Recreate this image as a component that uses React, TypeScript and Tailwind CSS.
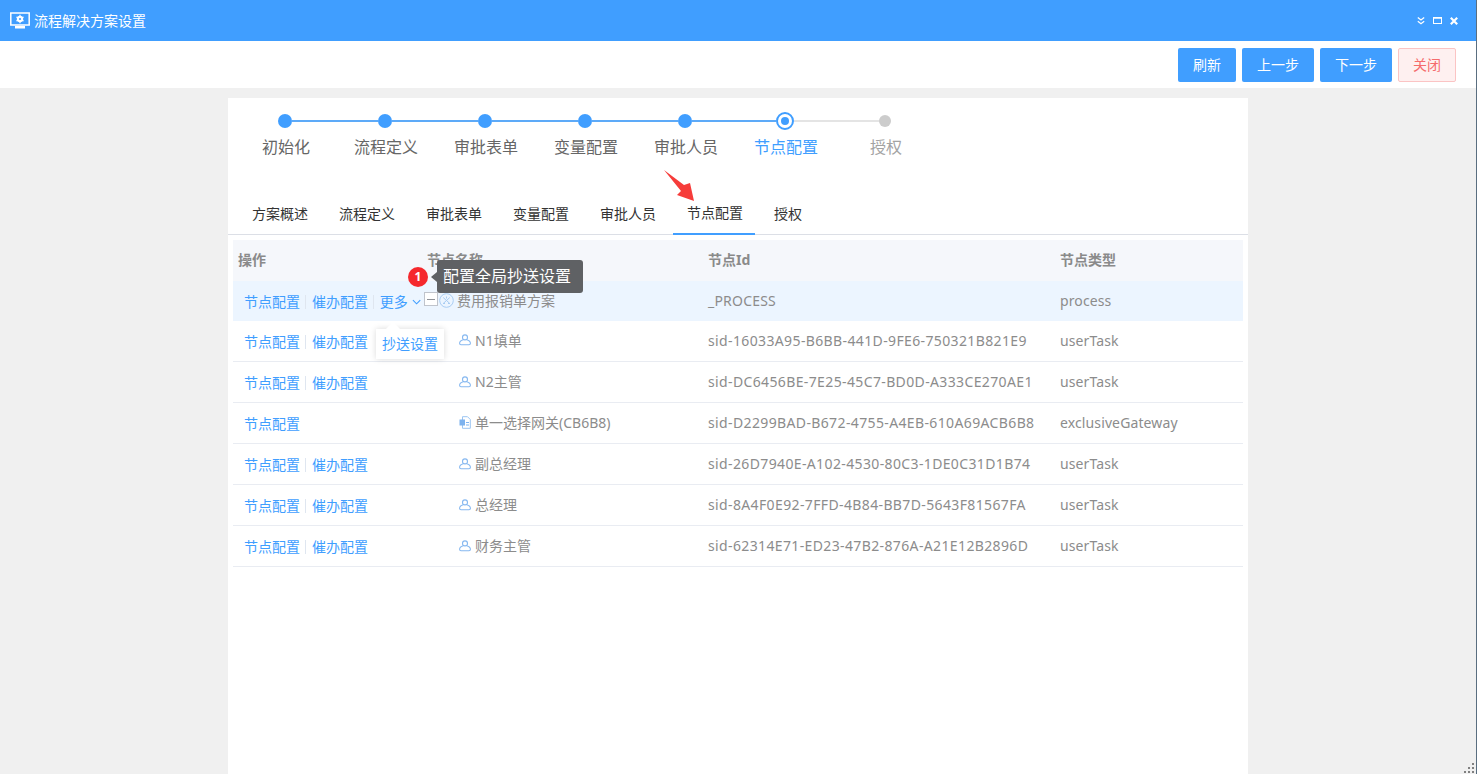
import React from "react";

const steps = [
  { t: "初始化", s: "done" },
  { t: "流程定义", s: "done" },
  { t: "审批表单", s: "done" },
  { t: "变量配置", s: "done" },
  { t: "审批人员", s: "done" },
  { t: "节点配置", s: "active" },
  { t: "授权", s: "todo" },
];
const tabs = ["方案概述", "流程定义", "审批表单", "变量配置", "审批人员", "节点配置", "授权"];
type Row = { name: string; id: string; type: string; icon: "root" | "user" | "doc"; urge: boolean; h: string; more?: boolean };
const rows: Row[] = [
  { name: "费用报销单方案", id: "_PROCESS", type: "process", icon: "root", urge: true, h: "h-[40px]", more: true },
  { name: "N1填单", id: "sid-16033A95-B6BB-441D-9FE6-750321B821E9", type: "userTask", icon: "user", urge: true, h: "h-[41px]" },
  { name: "N2主管", id: "sid-DC6456BE-7E25-45C7-BD0D-A333CE270AE1", type: "userTask", icon: "user", urge: true, h: "h-[41px]" },
  { name: "单一选择网关(CB6B8)", id: "sid-D2299BAD-B672-4755-A4EB-610A69ACB6B8", type: "exclusiveGateway", icon: "doc", urge: false, h: "h-[41px]" },
  { name: "副总经理", id: "sid-26D7940E-A102-4530-80C3-1DE0C31D1B74", type: "userTask", icon: "user", urge: true, h: "h-[41px]" },
  { name: "总经理", id: "sid-8A4F0E92-7FFD-4B84-BB7D-5643F81567FA", type: "userTask", icon: "user", urge: true, h: "h-[41px]" },
  { name: "财务主管", id: "sid-62314E71-ED23-47B2-876A-A21E12B2896D", type: "userTask", icon: "user", urge: true, h: "h-[41px]" },
];

function UserIcon() {
  return (
    <svg width="12" height="12" viewBox="0 0 12 12" fill="none" stroke="#86b8f0" strokeWidth="1.100">
      <circle cx="6" cy="3.400" r="2.500" />
      <path d="M4.300 5.700C2.400 6.200.6 7.300.6 9.200c0 1 .5 1.600 1.400 1.600h8c.9 0 1.400-.6 1.400-1.600 0-1.900-1.800-3-3.700-3.500" />
    </svg>
  );
}
function DocIcon() {
  return (
    <svg width="12" height="13" viewBox="0 0 12 13" fill="none">
      <path d="M3.500.7h5l2.800 2.800v8.800H3.500z" fill="#fff" stroke="#9cc5f2" />
      <rect x=".5" y="3.500" width="5.500" height="6" fill="#7db2ee" />
      <path d="M7 6.500h3M7 9h3" stroke="#7db2ee" />
    </svg>
  );
}
function RootIcon() {
  return (
    <svg width="15" height="15" viewBox="0 0 15 15" fill="none" stroke="#a9cdf3" strokeWidth="1">
      <circle cx="7.500" cy="7.500" r="6.800" />
      <path d="M4.200 4.500l6.600 6M10.800 4.500l-6.600 6M7.500 3.500v2M4 10.500h2M9 10.500h2" />
    </svg>
  );
}

function Step({ t, s, first, last }: { t: string; s: string; first: boolean; last: boolean }) {
  const leftOn = s !== "todo" ? "bg-[#5daaf8]" : "bg-[#e4e4e4]";
  const rightOn = s === "done" ? "bg-[#5daaf8]" : "bg-[#e4e4e4]";
  return (
    <div className="flex w-[100px] flex-col items-center">
      <div className="flex h-[18px] w-full items-center">
        <div className={`h-[2px] flex-1 ${first ? "" : leftOn}`} />
        {s === "done" && <div className="size-[14px] rounded-full bg-[#409eff]" />}
        {s === "active" && (
          <div className="flex size-[18px] items-center justify-center rounded-full border-2 border-[#409eff] bg-white">
            <div className="size-[8px] rounded-full bg-[#409eff]" />
          </div>
        )}
        {s === "todo" && <div className="size-[12px] rounded-full bg-[#cccccc]" />}
        <div className={`h-[2px] flex-1 ${last ? "" : rightOn}`} />
      </div>
      <div
        className={`mt-[5px] ml-[2px] text-[16px] leading-[24px] whitespace-nowrap ${
          s === "active" ? "text-[#409eff]" : s === "todo" ? "text-[#a3a3a3]" : "text-[#666666]"
        }`}
      >
        {t}
      </div>
    </div>
  );
}

function Link({ children }: { children: React.ReactNode }) {
  return <span className="text-[14px] leading-[20px] whitespace-nowrap text-[#409eff]">{children}</span>;
}
const Sep = () => <span className="mr-[6px] ml-[5px] h-[14px] w-px bg-[#dfe6f0]" />;

export default function App() {
  return (
    <div className="flex h-[774px] w-[1477px] flex-col overflow-hidden border-r border-[#5a6e80] bg-[#f0f0f0] font-['Noto_Sans','Noto_Sans_CJK_SC',sans-serif] text-[14px]">
      <header className="flex h-[41px] shrink-0 items-center bg-[#409eff] pr-[18px] pl-[10px] text-white">
        <svg width="20" height="17" viewBox="0 0 20 17" className="mr-[4px]">
          <rect x=".8" y="1" width="18.400" height="12" fill="none" stroke="#fff" strokeWidth="1.500" />
          <path d="M5 14h10v2.500H5z" fill="#fff" />
          <circle cx="10" cy="7" r="3.200" fill="#fff" />
          <path d="M10 2.800v8.400M6.400 4.900l7.200 4.200M6.400 9.100l7.200-4.200" stroke="#fff" strokeWidth="1.200" />
          <circle cx="10" cy="7" r="1.100" fill="#409eff" />
        </svg>
        <span className="text-[14px] leading-[20px]">流程解决方案设置</span>
        <div className="ml-auto flex items-center gap-[8px]">
          <svg width="8" height="8" viewBox="0 0 8 8" fill="none" stroke="#fff" strokeWidth="1.300">
            <path d="M.8 .5L4 3l3.200-2.500M.8 4.200L4 6.700l3.200-2.500" />
          </svg>
          <svg width="9" height="7" viewBox="0 0 9 7" fill="none" stroke="#fff">
            <rect x=".5" y=".5" width="8" height="6" strokeWidth="1" />
            <path d="M.5 1h8" strokeWidth="1.500" />
          </svg>
          <svg width="8" height="8" viewBox="0 0 8 8" fill="none" stroke="#fff" strokeWidth="2.200">
            <path d="M.8 .8l6.400 6.400M7.200 .8L.8 7.200" />
          </svg>
        </div>
      </header>

      <div className="flex h-[47px] shrink-0 items-center justify-end gap-[6px] bg-white pr-[20px]">
        <button className="h-[34px] w-[58px] rounded-[2px] bg-[#409eff] text-[14px] text-white">刷新</button>
        <button className="h-[34px] w-[72px] rounded-[2px] bg-[#409eff] text-[14px] text-white">上一步</button>
        <button className="h-[34px] w-[72px] rounded-[2px] bg-[#409eff] text-[14px] text-white">下一步</button>
        <button className="h-[34px] w-[58px] rounded-[2px] border border-[#fbc4c4] bg-[#fef0f0] text-[14px] text-[#f56c6c]">关闭</button>
      </div>

      <main className="relative mt-[10px] ml-[228px] w-[1020px] flex-1 bg-white">
        <div className="flex pt-[14px] pl-[7px]">
          {steps.map((s, i) => (
            <Step key={s.t} t={s.t} s={s.s} first={i === 0} last={i === steps.length - 1} />
          ))}
        </div>

        <div className="mt-[33px] flex h-[43px] border-b border-[#dcdfe6] pl-[10px]">
          {tabs.map((t, i) => (
            <div
              key={t}
              className={`mr-[5px] flex h-[43px] items-center pr-[12px] pl-[14px] text-[14px] text-[#333333] ${
                i === 5 ? "border-b-2 border-[#409eff]" : ""
              }`}
            >
              {t}
            </div>
          ))}
        </div>

        <div className="mx-[5px] mt-[5px] text-[#8c8c8c]">
          <div className="grid h-[41px] grid-cols-[188px_281px_352px_189px] items-center bg-[#f5f7fb] pb-[2px] text-[14px] font-bold text-[#8a8a8a]">
            <div className="pl-[5px]">操作</div>
            <div className="pl-[6px]">节点名称</div>
            <div className="pl-[6px]">节点Id</div>
            <div className="pl-[6px]">节点类型</div>
          </div>
          {rows.map((r, i) => (
            <div
              key={r.id}
              className={`grid grid-cols-[188px_281px_352px_189px] items-center ${r.h} ${
                i === 0 ? "bg-[#ecf5ff]" : "border-b border-[#e9ecf2]"
              }`}
            >
              <div className="flex items-center pt-[2px] pl-[11px]">
                <Link>节点配置</Link>
                {r.urge && <Sep />}
                {r.urge && <Link>催办配置</Link>}
                {r.more && <Sep />}
                {r.more && <Link>更多</Link>}
                {r.more && (
                  <svg width="10" height="6" viewBox="0 0 10 6" fill="none" stroke="#409eff" strokeWidth="1.200" className="ml-[4px]">
                    <path d="M1 1l4 4 4-4" />
                  </svg>
                )}
              </div>
              <div className={`flex items-center ${i === 1 ? "pb-[2px]" : "pb-[1px]"}`}>
                {r.icon === "root" ? (
                  <div className="ml-[3px] flex items-center">
                    <div className="mr-[1px] mb-[3px] flex size-[14px] items-center justify-center border border-[#c0c4cc] bg-white">
                      <div className="h-px w-[8px] bg-[#909399]" />
                    </div>
                    <RootIcon />
                    <span className="ml-[3px] leading-[21px]">{r.name}</span>
                  </div>
                ) : (
                  <div className="ml-[38px] flex items-center">
                    {r.icon === "user" ? <UserIcon /> : <DocIcon />}
                    <span className="ml-[4px] leading-[21px]">{r.name}</span>
                  </div>
                )}
              </div>
              <div className={`pl-[6px] whitespace-nowrap ${i === 1 ? "pb-[2px]" : "pb-[1px]"}`}>
                <span className={r.id.startsWith("sid") ? "tracking-[0.37px]" : "tracking-[0.2px]"}>{r.id}</span>
              </div>
              <div className={`pl-[6px] tracking-[0.12px] ${i === 1 ? "pb-[2px]" : "pb-[1px]"}`}>{r.type}</div>
            </div>
          ))}
        </div>

        <div className="absolute top-[162px] left-[180px] flex items-center">
          <div className="z-10 flex size-[20px] items-center justify-center rounded-full bg-[#f5282d] text-[12px] font-bold text-white">1</div>
          <div className="ml-[3px] h-0 w-0 border-y-[5px] border-r-[6px] border-y-transparent border-r-[#5f6164]" />
          <div className="h-[33px] rounded-[3px] bg-[#5f6164] pr-[12px] pl-[6px] text-[16px] leading-[33px] whitespace-nowrap text-white">配置全局抄送设置</div>
        </div>

        <div className="absolute top-[231px] left-[148px] flex h-[30px] w-[68px] items-center justify-center bg-white pb-[2px] text-[14px] text-[#409eff] shadow-[0_0_6px_rgba(0,0,0,0.15)]">
          抄送设置
          <div className="absolute -top-[5px] left-[12px] size-[10px] rotate-45 bg-white" />
        </div>

        <svg width="32" height="33" viewBox="0 0 32 33" className="absolute top-[72px] left-[436px]">
          <path d="M0 0L20 15L26 13L30 31L13 25L17 21Z" fill="#f63c3a" />
        </svg>
      </main>

      <svg width="12" height="12" viewBox="0 0 12 12" className="absolute top-[762px] left-[1463px]" fill="#808080">
        <rect x="9" y="1" width="2" height="2" />
        <rect x="5" y="5" width="2" height="2" />
        <rect x="9" y="5" width="2" height="2" />
        <rect x="1" y="9" width="2" height="2" />
        <rect x="5" y="9" width="2" height="2" />
        <rect x="9" y="9" width="2" height="2" />
      </svg>
    </div>
  );
}
